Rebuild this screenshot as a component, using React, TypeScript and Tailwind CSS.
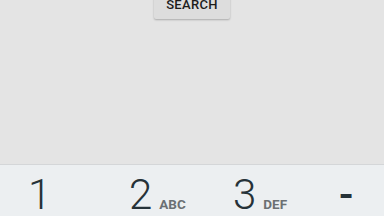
export default function App() {
  return (
    <main
      className="flex h-[216px] w-[384px] flex-col overflow-hidden bg-[#e4e4e4]"
      style={{ fontFamily: "Roboto, 'Noto Sans', sans-serif" }}
    >
      <div className="flex h-[164px] justify-center">
        <button className="-mt-[12px] h-[31px] w-[76px] rounded-[2px] bg-[#dddddd] pt-[2px] text-[13px] font-medium tracking-wide text-[#1c1c1c] shadow-[0_1px_2px_rgba(0,0,0,0.25)]">
          SEARCH
        </button>
      </div>
      <div className="grid flex-1 grid-cols-[103px_103px_103px_1fr] border-t border-[#d4d6d8] bg-[#eceff1] text-[#263238]">
        <div className="flex items-baseline pl-[28px] pt-[9px]">
          <span className="text-[42px] font-light leading-none">1</span>
        </div>
        <div className="flex items-baseline pl-[26px] pt-[9px]">
          <span className="text-[42px] font-light leading-none">2</span>
          <span className="ml-[7px] text-[13.5px] font-bold text-[#6b7073]">ABC</span>
        </div>
        <div className="flex items-baseline pl-[27px] pt-[9px]">
          <span className="text-[42px] font-light leading-none">3</span>
          <span className="ml-[7px] text-[13.5px] font-bold text-[#6b7073]">DEF</span>
        </div>
        <div className="flex items-baseline pl-[30px] pt-[9px]">
          <span className="text-[42px] font-medium leading-none">-</span>
        </div>
      </div>
    </main>
  )
}
